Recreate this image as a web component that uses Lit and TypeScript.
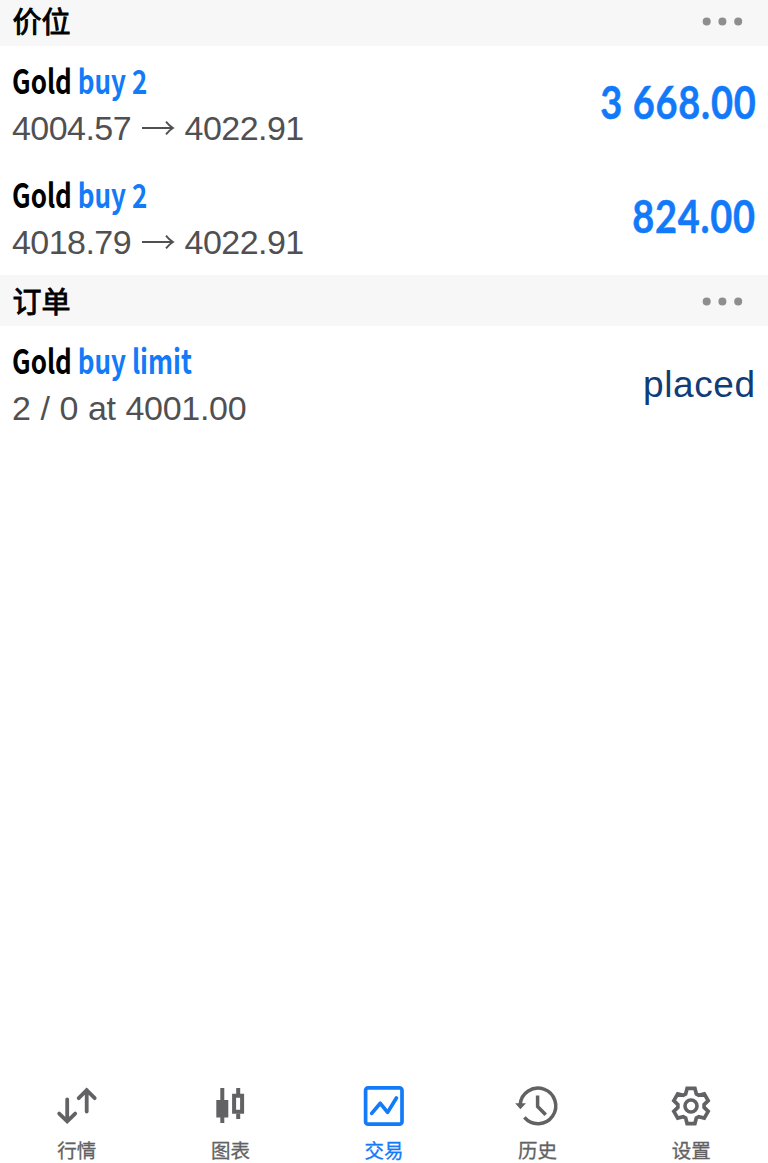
import { LitElement, html, css, svg } from "lit";
import { customElement, property } from "lit/decorators.js";

const arrow = html`<svg class="arrow" width="34" height="16" viewBox="0 0 34 16"><path d="M1 8H31.6M25 1.6Q28 5.6 32 8Q28 10.4 25 14.4" fill="none" stroke="#505053" stroke-width="1.8"/></svg>`;

@customElement("section-header")
class SectionHeader extends LitElement {
  @property() label = "";
  static styles = css`
    :host { display: flex; flex: none; height: 51px; box-sizing: border-box; padding: 0 25px 0 12.5px; align-items: center; justify-content: space-between; background: #f7f7f7; }
    .label { font: 400 29px/48px "Noto Sans CJK SC", sans-serif; height: 50px; color: #000; -webkit-text-stroke: 0.9px #000; }
    svg { display: block; margin-top: 1px; }
  `;
  render() {
    return html`<span class="label">${this.label}</span>
      <svg width="41" height="9" viewBox="0 0 41 9" fill="#8e8e90"><circle cx="4.7" cy="4.5" r="4"/><circle cx="20.4" cy="4.5" r="4"/><circle cx="36.2" cy="4.5" r="4"/></svg>`;
  }
}

@customElement("trade-row")
class TradeRow extends LitElement {
  @property() side = "";
  @property() from = "";
  @property() to = "";
  @property() value = "";
  @property() status = "";
  static styles = css`
    :host { display: flex; flex: none; height: 114px; box-sizing: border-box; padding: 12px 13px 0 12px; justify-content: space-between; }
    .title { height: 47px; font: 700 33px/44px "Noto Sans CJK SC", sans-serif; color: #000; white-space: pre; transform: scaleX(0.788); transform-origin: 0 0; }
    .side { color: #137af8; }
    .sub { display: flex; align-items: center; font: 34px/46px "Liberation Sans", sans-serif; letter-spacing: -0.3px; word-spacing: 0.7px; color: #505053; white-space: pre; }
    .sub.prices { letter-spacing: -0.55px; }
    .arrow { margin: 0 9.5px 0 10px; }
    .value { height: 90px; font: 700 46px/88px Lato, sans-serif; font-kerning: none; letter-spacing: 0.9px; margin-right: -0.9px; color: #127af8; -webkit-text-stroke: 0.5px #127af8; white-space: pre; transform: scaleX(0.825); transform-origin: 100% 0; }
    .status { font: 37px/94px "Liberation Sans", sans-serif; letter-spacing: 0.6px; margin-right: -0.6px; color: #103c78; }
  `;
  render() {
    return html`<div>
        <div class="title">Gold <span class="side">${this.side}</span></div>
        <div class="sub ${this.to ? "prices" : ""}"><span>${this.from}</span>${this.to ? html`${arrow}<span>${this.to}</span>` : ""}</div>
      </div>
      ${this.status ? html`<div class="status">${this.status}</div>` : html`<div class="value">${this.value}</div>`}`;
  }
}

const gear = () => {
  const pts: string[] = [];
  for (let i = 0; i < 6; i++) {
    const a = i * 60 - 90;
    for (const [d, r] of [[-24, 13.2], [-12.5, 18], [12.5, 18], [24, 13.2]]) {
      const t = ((a + d) * Math.PI) / 180;
      pts.push(`${(22 + r * Math.cos(t)).toFixed(2)},${(22 + r * Math.sin(t)).toFixed(2)}`);
    }
  }
  return svg`<polygon points=${pts.join(" ")} stroke-width="3.7"/><circle cx="22" cy="22" r="6" stroke-width="3.6"/>`;
};

const tabs = [
  { label: "行情", icon: svg`<path d="M12.2 15.5V37M4.2 29.6L12.2 37.4L20.2 29.6M31.7 27.5V6M23.7 14.2L31.7 6.2L39.7 14.2" stroke-width="3.8" stroke-linecap="round"/>` },
  { label: "图表", icon: svg`<path d="M14.3 4V39M30.2 4V10M30.2 29.5V35" stroke-width="4"/><path d="M8.3 16H20.3V33.5H8.3Z" fill="currentColor" stroke="none"/><path d="M26.1 11.7H34.1V27.7H26.1Z" stroke-width="4"/>` },
  { label: "交易", active: true, icon: svg`<rect x="3.6" y="3.8" width="36.4" height="36.4" rx="2.5" stroke-width="3.7"/><path d="M9.7 29.4L18.3 19.3L25.6 28.4L34.4 14" stroke-width="3.7" stroke-linecap="round" stroke-linejoin="round"/>` },
  { label: "历史", icon: svg`<path d="M4.2 20.5A17.8 17.8 0 1 1 8.4 33.4" stroke-width="3.5"/><path d="M-0.8 19.3H10L4.4 25.2Z" fill="currentColor" stroke="none"/><path d="M21.6 11.5V22.5L29.7 30.8" stroke-width="3.5"/>` },
  { label: "设置", icon: gear() },
];

@customElement("app-root")
class AppRoot extends LitElement {
  static styles = css`
    :host { display: flex; flex-direction: column; height: 1163px; overflow: hidden; background: #fff; }
    .first { height: 46px; overflow: hidden; display: flex; flex-direction: column; justify-content: flex-end; flex: none; }
    .last { margin-bottom: 1px; }
    .space { flex: 1; }
    nav { display: grid; grid-template-columns: repeat(5, 1fr); height: 79px; flex: none; }
    .tab { display: flex; flex-direction: column; align-items: center; color: #626264; font: 400 19.5px/30px "Noto Sans CJK SC", sans-serif; -webkit-text-stroke: 0.3px currentColor; }
    .tab.active { color: #137af8; }
    .tab svg { display: block; flex: none; margin-bottom: 7px; overflow: visible; }
  `;
  render() {
    return html`<div class="first"><section-header label="价位"></section-header></div>
      <trade-row side="buy 2" from="4004.57" to="4022.91" value="3 668.00"></trade-row>
      <trade-row class="last" side="buy 2" from="4018.79" to="4022.91" value="824.00"></trade-row>
      <section-header label="订单"></section-header>
      <trade-row side="buy limit" from="2 / 0 at 4001.00" status="placed"></trade-row>
      <div class="space"></div>
      <nav>${tabs.map((t) => html`<div class="tab ${t.active ? "active" : ""}">
        <svg width="44" height="44" viewBox="0 0 44 44" fill="none" stroke="currentColor">${t.icon}</svg><span>${t.label}</span></div>`)}</nav>`;
  }
}
